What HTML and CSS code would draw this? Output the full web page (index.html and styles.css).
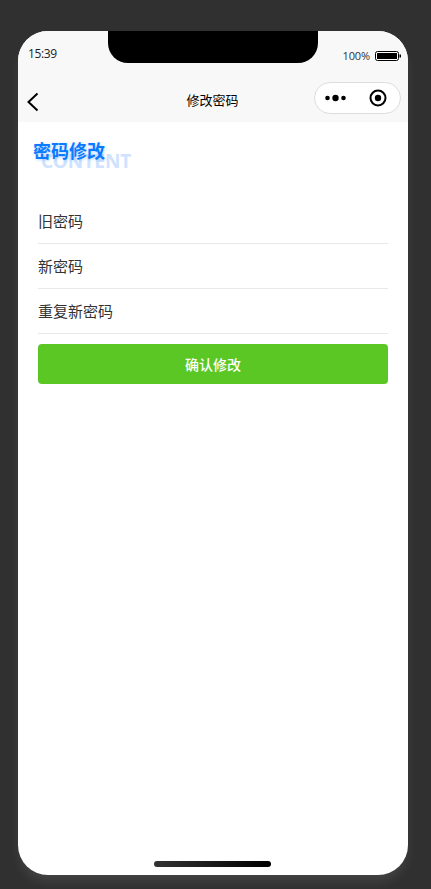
FILE: index.html
```html
<!DOCTYPE html>
<html lang="zh">
<head>
<meta charset="utf-8">
<title>修改密码</title>
<link rel="stylesheet" href="styles.css">
</head>
<body>
<div class="phone">
  <div class="notch"></div>
  <header class="top">
    <div class="status">
      <span class="time">15:39</span>
      <span class="battery-wrap">
        <span class="pct">100%</span>
        <svg class="battery" width="26" height="10" viewBox="0 0 26 10"><rect x="0.5" y="0.5" width="23" height="9" rx="2" fill="#fff" stroke="#000"/><rect x="2" y="2" width="20" height="6" rx="0.5" fill="#000"/><path d="M24.500 3.500h1.500v3h-1.500z" fill="#000"/></svg>
      </span>
    </div>
    <nav class="nav">
      <svg class="back" width="14" height="20" viewBox="0 0 14 20"><path d="M11.500 1.500 2.500 10l9 8.500" fill="none" stroke="#000" stroke-width="2"/></svg>
      <span class="nav-title">修改密码</span>
      <div class="capsule">
        <svg width="24" height="10" viewBox="0 0 24 10"><circle cx="2.500" cy="5" r="2.300"/><circle cx="10.500" cy="5" r="3.200"/><circle cx="18.500" cy="5" r="2.300"/></svg>
        <svg width="20" height="20" viewBox="0 0 20 20"><circle cx="10" cy="10" r="7.500" fill="none" stroke="#000" stroke-width="2"/><circle cx="10" cy="10" r="3.200"/></svg>
      </div>
    </nav>
  </header>
  <main class="content">
    <div class="heading">
      <span class="ghost">CONTENT</span>
      <h1 class="title">密码修改</h1>
    </div>
    <form class="form">
      <div class="row">旧密码</div>
      <div class="row">新密码</div>
      <div class="row">重复新密码</div>
      <button class="submit" type="button">确认修改</button>
    </form>
  </main>
  <div class="home"></div>
</div>
</body>
</html>
```
FILE: styles.css
```css
* { box-sizing: border-box; }
html, body { margin: 0; height: 100%; }
body {
  background: #303030;
  padding: 31px 23px 14px 18px;
  overflow: hidden;
  font-family: "Noto Sans CJK SC", "Noto Sans", sans-serif;
}
.phone {
  position: relative;
  width: 390px;
  height: 844px;
  background: #fff;
  border-radius: 30px;
  overflow: hidden;
  box-shadow: 0 8px 12px -2px rgba(255, 255, 255, .1);
  display: flex;
  flex-direction: column;
}
.notch {
  position: absolute;
  left: 90px;
  top: 0;
  width: 210px;
  height: 32px;
  background: #000;
  border-radius: 0 0 20px 20px;
}
.top { background: #f8f8f8; height: 91px; flex: none; }
.status {
  height: 51px;
  padding: 14px 7px 0 10px;
  display: flex;
  justify-content: space-between;
  align-items: flex-start;
  color: #222;
}
.time { font-family: "Open Sans", sans-serif; font-size: 12px; line-height: 18px; letter-spacing: -.4px; }
.battery-wrap { display: flex; align-items: center; gap: 5px; margin-top: 3px; }
.pct { font-family: "Open Sans", sans-serif; font-size: 11px; line-height: 16px; color: #333; letter-spacing: -.1px; }
.battery { display: block; }
.nav {
  height: 40px;
  position: relative;
  display: flex;
  align-items: center;
  justify-content: center;
}
.back { position: absolute; left: 8px; top: 10px; }
.nav-title { font-size: 13px; line-height: 18px; color: #000; margin-top: -5px; font-weight: 400; margin-left: -1px; }
.capsule {
  position: absolute;
  left: 296px;
  top: 0;
  width: 87px;
  height: 32px;
  background: #fff;
  border: 1px solid #ddd;
  border-radius: 16px;
  display: flex;
  align-items: center;
  justify-content: space-between;
  padding: 0 12px 0 10px;
}
.content { flex: 1; padding: 0 20px; }
.heading { position: relative; height: 77px; }
.title {
  position: absolute;
  left: -5px;
  top: 15px;
  margin: 0;
  font-size: 18px;
  line-height: 26px;
  font-weight: 700;
  color: #0a7aff;
  text-shadow: 1px 1px 3px rgba(10, 122, 255, .3);
}
.ghost {
  position: absolute;
  left: 3px;
  top: 27px;
  font-family: "Noto Sans", sans-serif;
  font-size: 19px;
  line-height: 24px;
  font-weight: 700;
  color: #cfe3ff;
}
.row {
  height: 45px;
  border-bottom: 1px solid #e8e8e8;
  font-size: 15px;
  line-height: 44px;
  color: #333;
}
.submit {
  display: block;
  width: 100%;
  height: 40px;
  margin-top: 10px;
  border: 0;
  border-radius: 4px;
  background: #5ac725;
  color: #fff;
  font-family: inherit;
  font-size: 14px;
  font-weight: 500;
}
.home {
  position: absolute;
  left: 136px;
  top: 830px;
  width: 117px;
  height: 6px;
  border-radius: 3px;
  background: linear-gradient(90deg, #333, #000);
}
```
